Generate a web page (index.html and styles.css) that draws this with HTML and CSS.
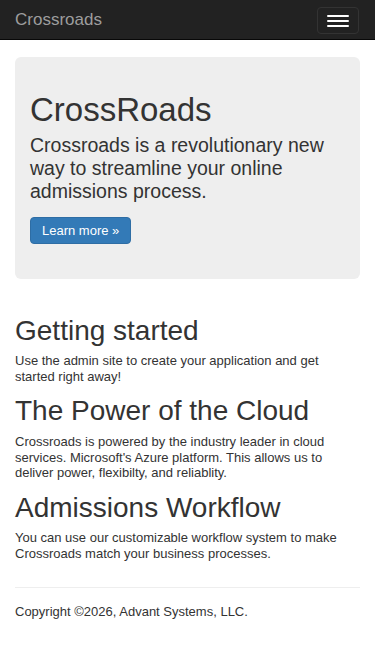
FILE: index.html
```html
<!DOCTYPE html>
<html lang="en">
<head>
    <meta charset="UTF-8">
    <meta name="viewport" content="width=device-width, initial-scale=1.0">
    <title>Crossroads</title>
    <link rel="stylesheet" href="styles.css">
</head>
<body>
    <nav class="navbar">
        <a class="brand" href="#">Crossroads</a>
        <button class="toggle" type="button">
            <span class="bar"></span>
            <span class="bar"></span>
            <span class="bar"></span>
        </button>
    </nav>
    <div class="container">
        <div class="jumbotron">
            <h1>CrossRoads</h1>
            <p class="lead">Crossroads is a revolutionary new way to streamline your online admissions process.</p>
            <div class="actions"><a class="btn" href="#">Learn more &raquo;</a></div>
        </div>
        <div class="features">
            <div class="col">
                <h2>Getting started</h2>
                <p>Use the admin site to create your application and get started right away!</p>
            </div>
            <div class="col">
                <h2>The Power of the Cloud</h2>
                <p>Crossroads is powered by the industry leader in cloud services. Microsoft's Azure platform. This allows us to deliver power, flexibilty, and reliablity.</p>
            </div>
            <div class="col">
                <h2>Admissions Workflow</h2>
                <p>You can use our customizable workflow system to make Crossroads match your business processes.</p>
            </div>
        </div>
        <hr>
        <footer>
            <p>Copyright &copy;2026, Advant Systems, LLC.</p>
        </footer>
    </div>
</body>
</html>
```

FILE: styles.css
```css
body {
    margin: 0;
    font-family: "Liberation Sans", Arial, Helvetica, sans-serif;
    font-size: 13px;
    line-height: 15.7px;
    color: #333;
    background: #fff;
}

.navbar {
    display: flex;
    justify-content: space-between;
    align-items: flex-start;
    height: 39px;
    background-color: #222;
    border-bottom: 1px solid #080808;
}

.brand {
    padding-left: 15px;
    font-size: 17px;
    line-height: 39px;
    color: #9d9d9d;
    text-decoration: none;
}

.toggle {
    display: flex;
    flex-direction: column;
    margin: 7px 16px 0 0;
    padding: 7px 9px 6px;
    background: transparent;
    border: 1px solid #333;
    border-radius: 4px;
}

.toggle .bar {
    display: block;
    width: 22px;
    height: 2px;
    background-color: #fff;
    border-radius: 1px;
}

.toggle .bar + .bar {
    margin-top: 3px;
}

.container {
    padding: 0 15px;
    margin-top: 17px;
}

.jumbotron {
    padding: 36.5px 15px 35px;
    background-color: #eee;
    border-radius: 6px;
}

.jumbotron h1 {
    margin: 0 0 8px;
    font-size: 33px;
    font-weight: normal;
    line-height: 32px;
}

.jumbotron .lead {
    margin: 0;
    font-size: 19.5px;
    line-height: 23.3px;
}

.actions {
    margin-top: 14px;
    height: 27px;
}

.btn {
    display: inline-block;
    padding: 4.5px 11px;
    font-size: 13px;
    line-height: 16px;
    color: #fff;
    text-decoration: none;
    background-color: #337ab7;
    border: 1px solid #2e6da4;
    border-radius: 4px;
}

.features {
    margin-top: 38.2px;
}

.features h2 {
    margin: 0 0 9px;
    font-size: 28px;
    font-weight: normal;
    line-height: 26.4px;
}

.features p {
    margin: 0 0 14px;
}

hr {
    height: 0;
    margin: 25.5px 0 15.4px;
    border: 0;
    border-top: 1px solid #eee;
}

footer p {
    margin: 0;
}
```
